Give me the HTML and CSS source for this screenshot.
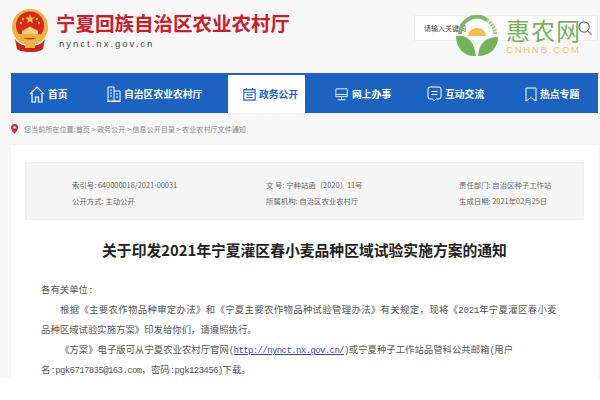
FILE: index.html
```html
<!DOCTYPE html>
<html lang="zh-CN">
<head>
    <meta charset="UTF-8">
    <title>关于印发2021年宁夏灌区春小麦品种区域试验实施方案的通知</title>
    <link rel="stylesheet" href="styles.css">
</head>
<body>
    <div class="page">
        <header class="header">
            <svg class="emblem" width="38" height="44" viewBox="0 0 38 44">
                <circle cx="19" cy="18" r="18" fill="#edb53f"/>
                <circle cx="19" cy="16.500" r="14" fill="#d8281e"/>
                <polygon points="19,5 20.2,8.6 24,8.6 21,10.8 22.1,14.4 19,12.2 15.9,14.4 17,10.8 14,8.6 17.8,8.6" fill="#f6c744"/>
                <circle cx="12" cy="10" r="1.2" fill="#f6c744"/>
                <circle cx="26" cy="10" r="1.2" fill="#f6c744"/>
                <circle cx="10" cy="14" r="1.2" fill="#f6c744"/>
                <circle cx="28" cy="14" r="1.2" fill="#f6c744"/>
                <path d="M11 26v-4l8-4.500 8 4.500v4z" fill="#f3cf7a"/>
                <rect x="8" y="25" width="22" height="4" fill="#e9b040"/>
                <path d="M4 30c4 6 9 7 15 7s11-1 15-7l-2 10c-4 3-8 3-13 3s-9 0-13-3z" fill="#c9261c"/>
                <rect x="14" y="33" width="10" height="6" fill="#edb53f"/>
            </svg>
            <div class="site">
                <div class="site-name">宁夏回族自治区农业农村厅</div>
                <div class="site-url">nynct.nx.gov.cn</div>
            </div>
            <div class="search">
                <span>请输入关键词</span>
                <svg width="14" height="14" viewBox="0 0 15 15" fill="none" stroke="#666" stroke-width="1.2">
                    <circle cx="6.500" cy="6.500" r="5.500"/>
                    <path d="M10.500 10.500l4 4"/>
                </svg>
            </div>
            <div class="watermark">
                <svg width="42" height="42" viewBox="0 0 42 42">
                    <path d="M4 19A17 17 0 0 1 31 5" fill="none" stroke="#7fb966" stroke-width="4"/>
                    <path d="M31 5A17 17 0 0 1 39 19" fill="none" stroke="#9ccb84" stroke-width="4" stroke-dasharray="2 1"/>
                    <path d="M12 21a9 8 0 0 1 18 0z" fill="#f4bd4e"/>
                    <path d="M0 21c10-2 18 4 20 20C8 42 0 33 0 21z" fill="#74b35a"/>
                    <path d="M22 41c1-13 8-19 20-19 0 11-8 19-20 19z" fill="#74b35a"/>
                </svg>
                <div class="wm-text">
                    <div class="wm-name">惠农网</div>
                    <div class="wm-url">CNHNB.COM</div>
                </div>
            </div>
        </header>

        <nav class="nav">
            <a class="nav-item nav-home">
                <svg width="16" height="17" viewBox="0 0 16 17" fill="none" stroke="#fff" stroke-width="1.2">
                    <path d="M1 8l7-7 7 7M3 7v9h3.500v-5h3v5H13V7"/>
                </svg>
                首页
            </a>
            <a class="nav-item nav-dept">
                <svg width="14" height="16" viewBox="0 0 14 16" fill="none" stroke="#fff" stroke-width="1">
                    <path d="M1 15V1h6v14zM7 5h6v10H7M3 4h2M3 7h2M3 10h2M9 8h2M9 11h2M0 15.500h14"/>
                </svg>
                自治区农业农村厅
            </a>
            <a class="nav-item nav-open active">
                <svg width="13" height="16" viewBox="0 0 15 16" fill="none" stroke="#1c62c0" stroke-width="1.3">
                    <path d="M1 3h13v12H1zM4 1v3M11 1v3M1 6h13M4 9h7M4 12h7"/>
                </svg>
                政务公开
            </a>
            <a class="nav-item nav-online">
                <svg width="14" height="15" viewBox="0 0 16 15" fill="none" stroke="#fff" stroke-width="1">
                    <path d="M1 1h13v9H1zM1 7.500h13M7.500 10v3M3 13.500h9"/>
                </svg>
                网上办事
            </a>
            <a class="nav-item nav-talk">
                <svg width="15" height="16" viewBox="0 0 15 16" fill="none" stroke="#fff" stroke-width="1">
                    <path d="M3 1h9a2 2 0 0 1 2 2v8a2 2 0 0 1-2 2H9l-2 2-1.500-2H3a2 2 0 0 1-2-2V3a2 2 0 0 1 2-2zM4.500 5.500h6M4.500 8.500h6"/>
                </svg>
                互动交流
            </a>
            <a class="nav-item nav-topic">
                <svg width="12" height="15" viewBox="0 0 12 15" fill="none" stroke="#fff" stroke-width="1">
                    <path d="M1 1h10v13L6 10.500 1 14z"/>
                </svg>
                热点专题
            </a>
        </nav>

        <div class="crumb">
            <svg width="7" height="10" viewBox="0 0 7 10">
                <path d="M3.500 0A3.500 3.500 0 0 0 0 3.500C0 6 3.500 10 3.500 10S7 6 7 3.500A3.500 3.500 0 0 0 3.500 0z" fill="#d8282a"/>
                <circle cx="3.500" cy="3.500" r="1.300" fill="#fff"/>
            </svg>
            <span>您当前所在位置:首页 &gt; 政务公开 &gt; 信息公开目录 &gt; 农业农村厅文件通知</span>
        </div>

        <main class="card">
            <div class="info">
                <div class="info-col col-a">
                    <p>索引号: 640000018/2021-00031</p>
                    <p>公开方式: 主动公开</p>
                </div>
                <div class="info-col col-b">
                    <p>文 号: 宁种站函〔2020〕11号</p>
                    <p>所属机构: 自治区农业农村厅</p>
                </div>
                <div class="info-col col-c">
                    <p>责任部门: 自治区种子工作站</p>
                    <p>生成日期: 2021年02月25日</p>
                </div>
            </div>
            <h1 class="title">关于印发2021年宁夏灌区春小麦品种区域试验实施方案的通知</h1>
            <div class="article">
                <p>各有关单位:</p>
                <p class="indent"><span class="wide">根据《主要农作物品种审定办法》和《宁夏主要农作物品种试验管理办法》有关规定，现将《<span class="latin">2021</span>年宁夏灌区春小麦</span>品种区域试验实施方案》印发给你们，请遵照执行。</p>
                <p class="indent">《方案》电子版可从宁夏农业农村厅官网<span class="latin">(<a href="#">http://nynct.nx.gov.cn/</a>)</span>或宁夏种子工作站品管科公共邮箱<span class="latin">(</span>用户名<span class="latin">:pgk6717835@163.com</span>，密码<span class="latin">:pgk123456)</span>下载。</p>
            </div>
        </main>
    </div>
</body>
</html>
```

FILE: styles.css
```css
html, body {
    margin: 0;
    height: 400px;
    overflow: hidden;
    background-color: #fff;
}
body {
    font-family: "Noto Sans CJK SC", "Liberation Sans", sans-serif;
}
.page {
    height: 378px;
    padding-left: 11px;
    background-color: #f7f7f7;
}
.header {
    display: flex;
    align-items: flex-start;
    height: 73px;
    position: relative;
}
.emblem {
    margin-top: 9px;
}
.site {
    margin: 10px 0 0 7px;
}
.site-name {
    font-size: 19.5px;
    line-height: 26px;
    font-weight: 700;
    color: #c8202a;
}
.site-url {
    font-family: "Liberation Sans", sans-serif;
    font-size: 9.500px;
    line-height: 12px;
    letter-spacing: 2px;
    margin: 2px 0 0 3px;
    color: #444;
}
.search {
    display: flex;
    align-items: center;
    justify-content: space-between;
    box-sizing: border-box;
    width: 184px;
    height: 26px;
    margin: 15px 2px 0 auto;
    padding: 0 5px 0 9px;
    background-color: #fff;
    border: 1px solid #eee;
    font-size: 7px;
    color: #444;
}
.watermark {
    position: absolute;
    left: 445px;
    top: 15px;
    display: flex;
    gap: 8px;
}
.wm-name {
    font-size: 24px;
    line-height: 29px;
    letter-spacing: 1px;
    color: #74b35a;
}
.wm-url {
    font-family: "Liberation Sans", sans-serif;
    font-size: 9.500px;
    line-height: 11px;
    letter-spacing: 1.800px;
    color: #f4c264;
}
.nav {
    display: flex;
    align-items: flex-end;
    height: 40px;
    width: 587px;
    background-color: #1c62c0;
}
.nav-item {
    display: flex;
    align-items: center;
    box-sizing: border-box;
    gap: 3px;
    height: 38px;
    font-size: 9.800px;
    font-weight: 700;
    color: #fff;
}
.nav-home { width: 78px; padding-left: 18px; }
.nav-dept { width: 139px; padding-left: 18px; }
.nav-open { width: 77px; padding-left: 15px; }
.nav-online { width: 102px; padding-left: 30px; }
.nav-talk { width: 98px; padding-left: 20px; }
.nav-topic { width: 93px; padding-left: 20px; }
.active {
    background-color: #fff;
    color: #1c62c0;
}
.crumb {
    display: flex;
    align-items: center;
    gap: 6px;
    height: 12px;
    margin-top: 10px;
    font-size: 7.100px;
    line-height: 12px;
    color: #888;
}
.card {
    box-sizing: border-box;
    width: 587px;
    height: 233px;
    margin-top: 10px;
    padding: 17px 14px 0;
    background-color: #fff;
}
.info {
    display: flex;
    box-sizing: border-box;
    height: 58px;
    padding-top: 14px;
    background-color: #f5f5f5;
    border: 1px solid #f0f0f0;
}
.info-col p {
    margin: 0;
    font-size: 7.400px;
    line-height: 16px;
    color: #666;
}
.col-a { width: 240px; padding-left: 46px; box-sizing: border-box; }
.col-b { width: 193px; }
.col-c { width: 120px; }
.title {
    margin: 20px 0 0;
    font-size: 14.800px;
    line-height: 20px;
    font-weight: 700;
    text-align: center;
    color: #222;
}
.article {
    margin: 21px 0 0 16px;
    width: 524px;
    font-family: "Liberation Mono", "Noto Sans CJK SC", monospace;
    font-size: 9.400px;
    line-height: 20px;
    color: #555;
}
.article p {
    margin: 0;
}
.indent {
    text-indent: 19px;
}
.wide {
    letter-spacing: 0.34px;
}
.latin {
    font-size: 9px;
    letter-spacing: -0.6px;
}
.wide .latin {
    letter-spacing: -0.2px;
}
.article a {
    color: #3344bb;
    text-decoration: underline;
}
```
